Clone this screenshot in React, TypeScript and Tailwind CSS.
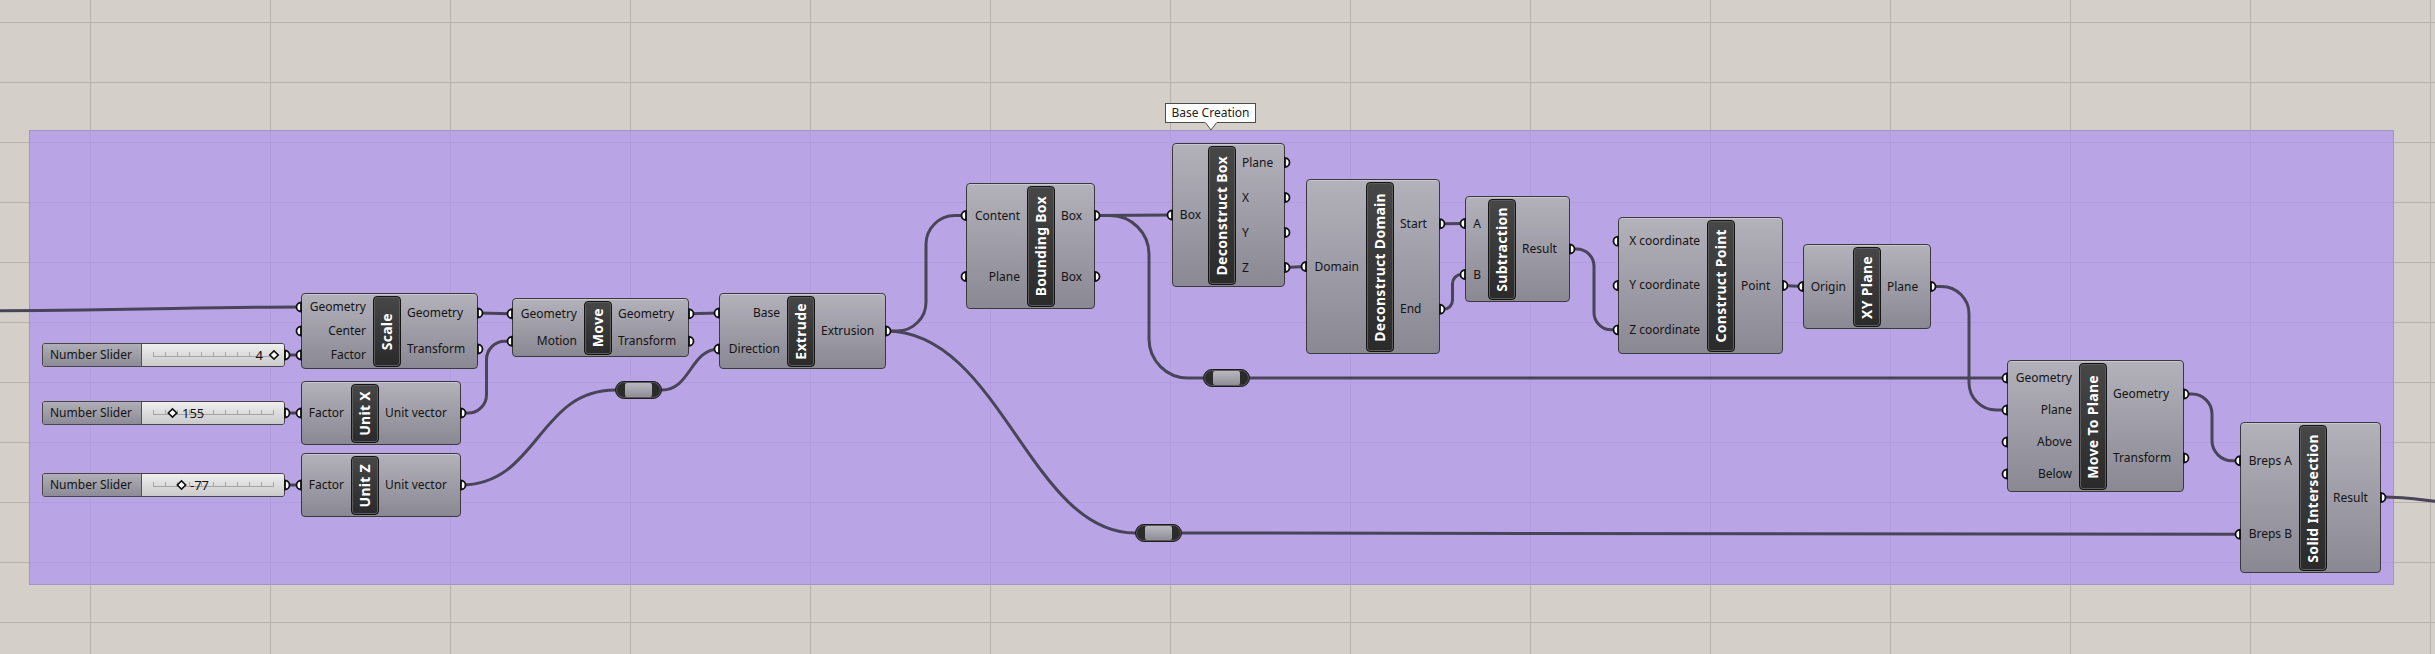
import React from 'react'

type NodeDef = {
  id: string
  x: number
  y: number
  w: number
  h: number
  tab: number
  tw?: number
  title: string
  ins: string[]
  outs: string[]
}

const nodes: NodeDef[] = [
  { id: 'scale', x: 301, y: 293, w: 177, h: 76, tab: 72, title: 'Scale', ins: ['Geometry', 'Center', 'Factor'], outs: ['Geometry', 'Transform'] },
  { id: 'ux', x: 301, y: 381, w: 160, h: 64, tab: 50, title: 'Unit X', ins: ['Factor'], outs: ['Unit vector'] },
  { id: 'uz', x: 301, y: 453, w: 160, h: 64, tab: 50, title: 'Unit Z', ins: ['Factor'], outs: ['Unit vector'] },
  { id: 'move', x: 512, y: 298, w: 177, h: 59, tab: 72, title: 'Move', ins: ['Geometry', 'Motion'], outs: ['Geometry', 'Transform'] },
  { id: 'ext', x: 719, y: 293, w: 167, h: 76, tab: 68, title: 'Extrude', ins: ['Base', 'Direction'], outs: ['Extrusion'] },
  { id: 'bbox', x: 966, y: 183, w: 129, h: 126, tab: 61, title: 'Bounding Box', ins: ['Content', 'Plane'], outs: ['Box', 'Box'] },
  { id: 'dbox', x: 1172, y: 143, w: 113, h: 144, tab: 36, title: 'Deconstruct Box', ins: ['Box'], outs: ['Plane', 'X', 'Y', 'Z'] },
  { id: 'ddom', x: 1306, y: 179, w: 134, h: 175, tab: 60, title: 'Deconstruct Domain', ins: ['Domain'], outs: ['Start', 'End'] },
  { id: 'sub', x: 1465, y: 196, w: 105, h: 106, tab: 23, title: 'Subtraction', ins: ['A', 'B'], outs: ['Result'] },
  { id: 'pt', x: 1618, y: 217, w: 165, h: 137, tab: 89, title: 'Construct Point', ins: ['X coordinate', 'Y coordinate', 'Z coordinate'], outs: ['Point'] },
  { id: 'xy', x: 1803, y: 244, w: 128, h: 85, tab: 50, title: 'XY Plane', ins: ['Origin'], outs: ['Plane'] },
  { id: 'mtp', x: 2007, y: 360, w: 177, h: 132, tab: 72, title: 'Move To Plane', ins: ['Geometry', 'Plane', 'Above', 'Below'], outs: ['Geometry', 'Transform'] },
  { id: 'si', x: 2240, y: 422, w: 141, h: 151, tab: 59, title: 'Solid Intersection', ins: ['Breps A', 'Breps B'], outs: ['Result'] },
]

const byId = (id: string) => nodes.find((n) => n.id === id)!

const pinIn = (id: string, i: number): [number, number] => {
  const n = byId(id)
  return [n.x, n.y + 2 + ((i + 0.5) * (n.h - 4)) / n.ins.length]
}
const pinOut = (id: string, i: number): [number, number] => {
  const n = byId(id)
  return [n.x + n.w, n.y + 2 + ((i + 0.5) * (n.h - 4)) / n.outs.length]
}

const sliders = [
  { y: 343, value: '4', dia: 132, text: 122, right: true },
  { y: 401, value: '155', dia: 30.5, text: 40, right: false },
  { y: 473, value: '-77', dia: 39.5, text: 48, right: false },
]

const relays = [
  { x: 615, y: 381 },
  { x: 1203, y: 369 },
  { x: 1135, y: 524 },
]

function wire(a: [number, number], b: [number, number]) {
  const [x1, y1] = a
  const [x2, y2] = b
  const dx = x2 - x1
  const dy = y2 - y1
  if (Math.abs(dy) < 1.5) return `M${x1} ${y1} L${x2} ${y2}`
  if (Math.abs(dy) <= dx) {
    const c = dx / 2
    return `M${x1} ${y1} C${x1 + c} ${y1} ${x2 - c} ${y2} ${x2} ${y2}`
  }
  const s = Math.sign(dy)
  const mx = (x1 + x2) / 2
  const r = Math.min(dx / 2, Math.abs(dy) / 2) * 0.72
  const k = 0.55
  return [
    `M${x1} ${y1}`,
    `H${mx - r}`,
    `C${mx - r + r * k} ${y1} ${mx} ${y1 + s * r * (1 - k)} ${mx} ${y1 + s * r}`,
    `V${y2 - s * r}`,
    `C${mx} ${y2 - s * r * (1 - k)} ${mx + r * (1 - k)} ${y2} ${mx + r} ${y2}`,
    `H${x2}`,
  ].join(' ')
}

const r1: [number, number] = [615, 390]
const r1o: [number, number] = [662, 390]
const r2: [number, number] = [1203, 378]
const r2o: [number, number] = [1250, 378]
const r3o: [number, number] = [1182, 533]

const wires: string[] = [
  `M-60 311 C120 311 200 307 301 307`,
  wire([285, 355], pinIn('scale', 2)),
  wire([285, 413], pinIn('ux', 0)),
  wire([285, 485], pinIn('uz', 0)),
  wire(pinOut('scale', 0), pinIn('move', 0)),
  wire(pinOut('ux', 0), pinIn('move', 1)),
  wire(pinOut('uz', 0), r1),
  wire(r1o, pinIn('ext', 1)),
  wire(pinOut('move', 0), pinIn('ext', 0)),
  wire(pinOut('ext', 0), pinIn('bbox', 0)),
  `M886 331 C1000 331 1030 533 1135 533`,
  wire(r3o, pinIn('si', 1)),
  wire(pinOut('bbox', 0), pinIn('dbox', 0)),
  wire(pinOut('bbox', 0), r2),
  wire(r2o, pinIn('mtp', 0)),
  wire(pinOut('dbox', 3), pinIn('ddom', 0)),
  wire(pinOut('ddom', 0), pinIn('sub', 0)),
  wire(pinOut('ddom', 1), pinIn('sub', 1)),
  wire(pinOut('sub', 0), pinIn('pt', 2)),
  wire(pinOut('pt', 0), pinIn('xy', 0)),
  wire(pinOut('xy', 0), pinIn('mtp', 1)),
  wire(pinOut('mtp', 0), pinIn('si', 0)),
  `M2381 497 C2410 497 2420 500 2450 503`,
]

function Grid() {
  const v = Array.from({ length: 14 }, (_, i) => 90 + i * 180)
  const h = Array.from({ length: 11 }, (_, i) => 22 + i * 60)
  return (
    <svg className="absolute inset-0" width={2435} height={654}>
      {v.map((x) => (
        <line key={'v' + x} x1={x + 0.5} y1={0} x2={x + 0.5} y2={654} stroke="#b6b1ab" strokeWidth={1} />
      ))}
      {h.map((y) => (
        <line key={'h' + y} x1={0} y1={y + 0.5} x2={2435} y2={y + 0.5} stroke="#b6b1ab" strokeWidth={1} />
      ))}
    </svg>
  )
}

function Node({ n }: { n: NodeDef }) {
  const tw = n.tw ?? 28
  return (
    <div
      className="absolute flex rounded-[4px] border border-[#3a3a3a] bg-gradient-to-b from-[#b3b1ba] to-[#8a8893] text-[12px] leading-none text-[#141414] shadow-[inset_0_1px_0_#c9c7cf]"
      style={{ left: n.x, top: n.y, width: n.w, height: n.h }}
    >
      <div className="flex flex-col py-[1px]" style={{ width: n.tab - 1 }}>
        {n.ins.map((s, i) => (
          <div key={i} className="flex flex-1 items-center justify-end whitespace-nowrap pr-[7px]">
            {s}
          </div>
        ))}
      </div>
      <div
        className="mt-[2px] mb-[1px] flex items-center justify-center rounded-[4px] border border-[#141414] bg-gradient-to-b from-[#474747] to-[#2a2a2a] shadow-[inset_0_0_0_1px_#5c5c5c]"
        style={{ width: tw }}
      >
        <span className="rotate-180 whitespace-nowrap text-[14px] font-bold tracking-[0.3px] text-white [writing-mode:vertical-rl]">
          {n.title}
        </span>
      </div>
      <div className="flex flex-1 flex-col py-[1px]">
        {n.outs.map((s, i) => (
          <div key={i} className="flex flex-1 items-center whitespace-nowrap pl-[6px]">
            {s}
          </div>
        ))}
      </div>
    </div>
  )
}

function Slider({ y, value, dia, text, right }: { y: number; value: string; dia: number; text: number; right: boolean }) {
  const ticks = Array.from({ length: 11 }, (_, i) => 11 + i * 12)
  return (
    <div
      className="absolute flex h-[24px] w-[243px] overflow-hidden rounded-[3px] border border-[#474747] text-[12px] leading-none text-[#141414]"
      style={{ left: 42, top: y }}
    >
      <div className="flex w-[99px] items-center border-r border-[#505050] bg-gradient-to-b from-[#b0aeb7] to-[#8d8b95] pl-[7px]">
        Number Slider
      </div>
      <div className="relative flex-1 bg-gradient-to-b from-[#eeeeee] to-[#cbcbcb]">
        <svg className="absolute inset-0" width={143} height={22}>
          <line x1={11} y1={12.5} x2={132} y2={12.5} stroke="#a5a5a5" strokeWidth={1} />
          {ticks.map((t) => (
            <line key={t} x1={t + 0.5} y1={8} x2={t + 0.5} y2={12.5} stroke="#a5a5a5" strokeWidth={1} />
          ))}
          <rect
            x={dia - 3}
            y={8}
            width={6}
            height={6}
            transform={`rotate(45 ${dia} 11)`}
            fill="#ffffff"
            stroke="#111111"
            strokeWidth={1.6}
          />
        </svg>
        <span
          className="absolute top-[5px] text-[13px]"
          style={right ? { right: 143 - text } : { left: text }}
        >
          {value}
        </span>
      </div>
    </div>
  )
}

function Relay({ x, y }: { x: number; y: number }) {
  return (
    <div
      className="absolute flex h-[18px] w-[47px] rounded-full border border-[#1c1c1c] bg-[#2b2b2b] px-[9px] py-[1px] shadow-[inset_0_0_0_1px_#5a5a5a]"
      style={{ left: x, top: y }}
    >
      <div className="flex-1 rounded-[2px] bg-gradient-to-b from-[#b9b8c0] to-[#8f8e97]" />
    </div>
  )
}

function Grips() {
  const pts: { x: number; y: number; side: 'in' | 'out' }[] = []
  nodes.forEach((n) => {
    n.ins.forEach((_, i) => {
      const [x, y] = pinIn(n.id, i)
      pts.push({ x, y, side: 'in' })
    })
    n.outs.forEach((_, i) => {
      const [x, y] = pinOut(n.id, i)
      pts.push({ x, y, side: 'out' })
    })
  })
  sliders.forEach((s) => pts.push({ x: 285, y: s.y + 12, side: 'out' }))
  const R = 4.5
  return (
    <svg className="absolute inset-0" width={2435} height={654}>
      {pts.map((p, i) => (
        <path
          key={i}
          d={
            p.side === 'in'
              ? `M${p.x} ${p.y - R} A${R} ${R} 0 0 0 ${p.x} ${p.y + R} Z`
              : `M${p.x} ${p.y - R} A${R} ${R} 0 0 1 ${p.x} ${p.y + R} Z`
          }
          fill="#ffffff"
          stroke="#101010"
          strokeWidth={1.8}
        />
      ))}
    </svg>
  )
}

export default function App() {
  return (
    <div className="relative h-[654px] w-[2435px] overflow-hidden bg-[#d4d0c9] font-['Noto_Sans',sans-serif]">
      <Grid />

      <div className="absolute left-[29px] top-[130px] h-[455px] w-[2365px] border border-[#a295c4] bg-[rgba(178,152,238,0.8)]" />

      <svg className="absolute inset-0" width={2435} height={654}>
        {wires.map((d, i) => (
          <path key={i} d={d} fill="none" stroke="#4a4459" strokeWidth={3} strokeLinecap="round" />
        ))}
      </svg>

      {nodes.map((n) => (
        <Node key={n.id} n={n} />
      ))}

      {sliders.map((s, i) => (
        <Slider key={i} {...s} />
      ))}

      {relays.map((r, i) => (
        <Relay key={i} {...r} />
      ))}

      <Grips />

      <div className="absolute left-[1165px] top-[103px] flex h-[20px] w-[91px] items-center justify-center border border-[#4d4d4d] bg-white text-[12px] leading-none text-[#222]">
        Base Creation
      </div>
      <svg className="absolute left-[1204px] top-[122px]" width={15} height={10}>
        <path d="M1 0 L7 8 L13 0" fill="#ffffff" stroke="#4d4d4d" strokeWidth={1} />
        <rect x={1.5} y={0} width={11} height={1} fill="#ffffff" />
      </svg>
    </div>
  )
}
